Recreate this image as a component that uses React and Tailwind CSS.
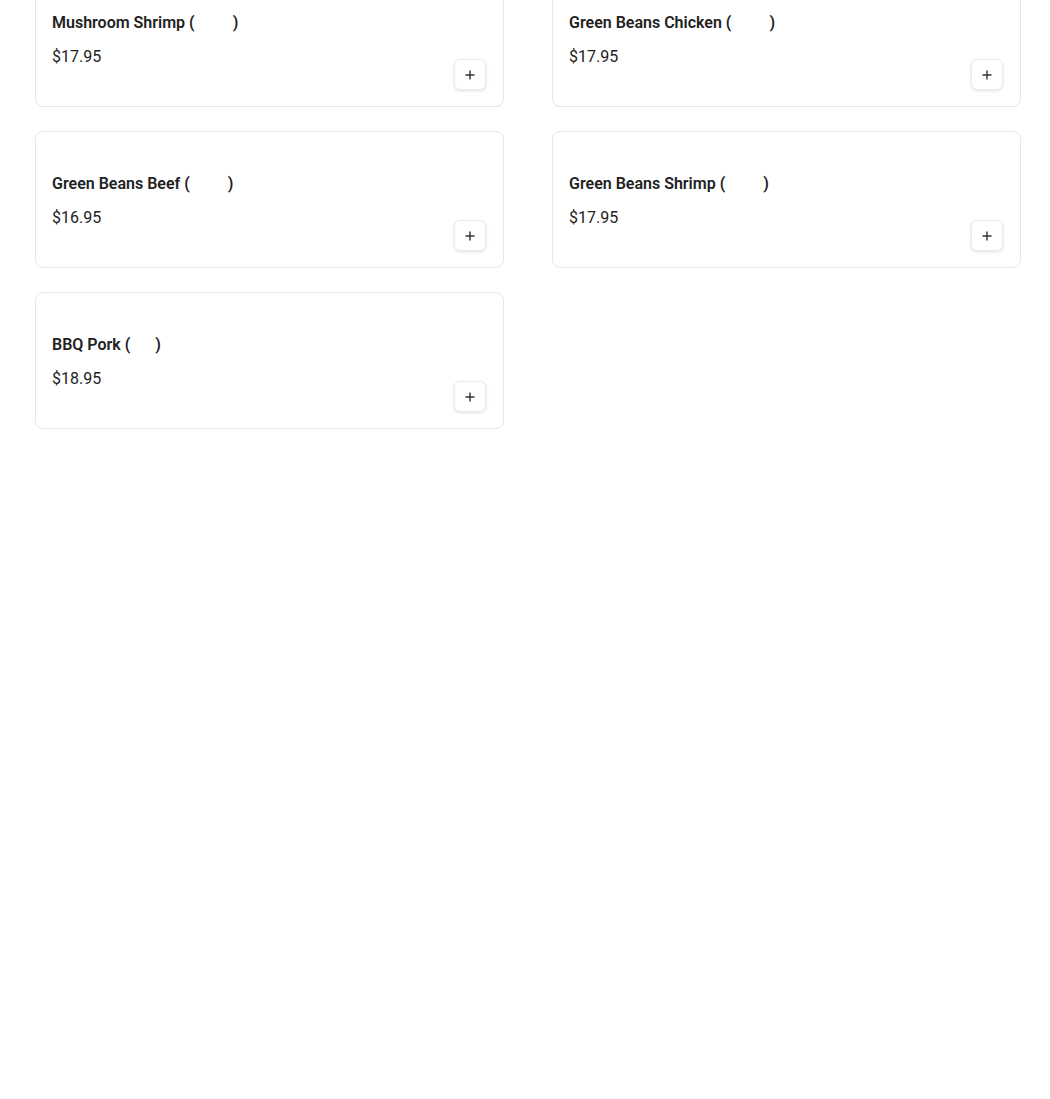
import React from "react";

const items = [
  { name: "Mushroom Shrimp", w: "w-[38px]", price: "$17.95" },
  { name: "Green Beans Chicken", w: "w-[38px]", price: "$17.95" },
  { name: "Green Beans Beef", w: "w-[38px]", price: "$16.95" },
  { name: "Green Beans Shrimp", w: "w-[38px]", price: "$17.95" },
  { name: "BBQ Pork", w: "w-[25px]", price: "$18.95" },
];

function Card({ item }) {
  return (
    <div className="h-[137px] rounded-lg border border-[#e6e6e6] bg-white pl-4 pr-[16px] pt-[42px] pb-[16px] flex flex-col">
      <div className="h-5 text-[16px] leading-5 font-semibold text-[#222] whitespace-nowrap">
        {item.name} (<span className={`inline-block ${item.w}`}></span>)
      </div>
      <div className="flex-1 flex justify-between">
        <div className="mt-[14px] text-[16px] leading-5 text-[#222]">{item.price}</div>
        <button className="self-end mr-px w-8 h-[31px] rounded-md border border-[#ececec] bg-white shadow-[0_1px_3px_rgba(0,0,0,0.12)] flex items-center justify-center">
          <svg width="10" height="10" viewBox="0 0 10 10">
            <path d="M5 0.5V9.5M0.5 5H9.5" stroke="#333" strokeWidth="1.4" />
          </svg>
        </button>
      </div>
    </div>
  );
}

export default function App() {
  return (
    <div className="min-h-[1099px] bg-white" style={{ fontFamily: "Roboto, 'Noto Sans CJK SC', sans-serif" }}>
      <div className="-mt-[30px] ml-[35px] grid grid-cols-[469px_469px] gap-x-[48px] gap-y-[24px]">
        {items.map((it) => (
          <Card key={it.name} item={it} />
        ))}
      </div>
    </div>
  );
}
